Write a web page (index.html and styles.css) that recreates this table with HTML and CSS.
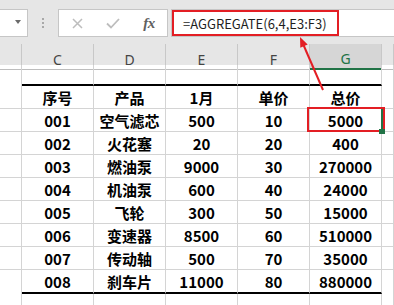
FILE: index.html
```html
<!DOCTYPE html>
<html>
<head>
<meta charset="utf-8">
<link rel="stylesheet" href="styles.css">
</head>
<body>
<div class="app">
  <div class="fbar">
    <div class="namebox"><span class="caret"></span></div>
    <div class="grip"><i></i><i></i><i></i></div>
    <div class="btns">
      <span class="btn"><svg width="11" height="11" viewBox="0 0 11 11"><path d="M1 1L10 10M10 1L1 10" stroke="#bdbdbd" stroke-width="1.5" fill="none"/></svg></span>
      <span class="btn"><svg width="14" height="11" viewBox="0 0 14 11"><path d="M1 5.5L5 9.5L13 1" fill="none" stroke="#bdbdbd" stroke-width="1.8"/></svg></span>
      <span class="btn fx">fx</span>
    </div>
    <div class="formula"><span class="ftext">=AGGREGATE(6,4,E3:F3)</span></div>
  </div>

  <div class="colhead">
    <div class="h"></div>
    <div class="h">C</div>
    <div class="h">D</div>
    <div class="h">E</div>
    <div class="h">F</div>
    <div class="h sel">G</div>
    <div class="h"></div>
  </div>

  <div class="sheet">
    <div class="c edge"></div><div class="c top"></div><div class="c top"></div><div class="c top"></div><div class="c top"></div><div class="c top"></div><div class="c edge"></div>

    <div class="c"></div><div class="c">序号</div><div class="c">产品</div><div class="c">1月</div><div class="c">单价</div><div class="c">总价</div><div class="c"></div>

    <div class="c"></div><div class="c">001</div><div class="c">空气滤芯</div><div class="c">500</div><div class="c">10</div><div class="c">5000</div><div class="c"></div>
    <div class="c"></div><div class="c">002</div><div class="c">火花塞</div><div class="c">20</div><div class="c">20</div><div class="c">400</div><div class="c"></div>
    <div class="c"></div><div class="c">003</div><div class="c">燃油泵</div><div class="c">9000</div><div class="c">30</div><div class="c">270000</div><div class="c"></div>
    <div class="c"></div><div class="c">004</div><div class="c">机油泵</div><div class="c">600</div><div class="c">40</div><div class="c">24000</div><div class="c"></div>
    <div class="c"></div><div class="c">005</div><div class="c">飞轮</div><div class="c">300</div><div class="c">50</div><div class="c">15000</div><div class="c"></div>
    <div class="c"></div><div class="c">006</div><div class="c">变速器</div><div class="c">8500</div><div class="c">60</div><div class="c">510000</div><div class="c"></div>
    <div class="c"></div><div class="c">007</div><div class="c">传动轴</div><div class="c">500</div><div class="c">70</div><div class="c">35000</div><div class="c"></div>
    <div class="c edge"></div><div class="c bot">008</div><div class="c bot">刹车片</div><div class="c bot">11000</div><div class="c bot">80</div><div class="c bot">880000</div><div class="c edge"></div>

    <div class="c"></div><div class="c"></div><div class="c"></div><div class="c"></div><div class="c"></div><div class="c"></div><div class="c"></div>
  </div>

  <svg class="overlay" width="394" height="305" viewBox="0 0 394 305">
    <rect x="308" y="108" width="74" height="23" fill="none" stroke="#217346" stroke-width="2"/>
    <rect x="308" y="108" width="76" height="23" fill="none" stroke="#e31e24" stroke-width="2"/>
    <rect x="379" y="129" width="6" height="5" fill="#217346"/>
    <line x1="323" y1="90" x2="303.5" y2="45" stroke="#e31e24" stroke-width="2"/>
    <polygon points="300,37 307.7,44.6 300.3,47.8" fill="#e31e24"/>
  </svg>
</div>
</body>
</html>
```

FILE: styles.css
```css
html, body {
  margin: 0;
  padding: 0;
  background: #fff;
}

.app {
  position: relative;
  width: 394px;
  height: 305px;
  overflow: hidden;
  background: #fff;
  font-family: "Noto Sans CJK SC", "Noto Sans", sans-serif;
}

.fbar {
  height: 44px;
  box-sizing: border-box;
  background: #e6e6e6;
  display: flex;
  align-items: flex-start;
  padding-top: 9px;
}

.namebox {
  width: 29px;
  height: 28px;
  margin-left: -1px;
  box-sizing: border-box;
  background: #fff;
  border: 1px solid #c6c6c6;
  display: flex;
  align-items: flex-start;
  padding-left: 15px;
  padding-top: 10px;
}

.caret {
  width: 0;
  height: 0;
  border-left: 3px solid transparent;
  border-right: 3px solid transparent;
  border-top: 4px solid #6a6a6a;
}

.grip {
  width: 30px;
  display: flex;
  flex-direction: column;
  align-items: center;
  gap: 2px;
  padding-top: 9px;
}

.grip i {
  display: block;
  width: 2px;
  height: 2px;
  background: #a8a8a8;
}

.btns {
  width: 110px;
  height: 28px;
  box-sizing: border-box;
  background: #fff;
  border: 1px solid #c6c6c6;
  display: flex;
}

.btn {
  width: 36px;
  display: flex;
  align-items: center;
  justify-content: center;
}

.fx {
  font-family: "Liberation Serif", serif;
  font-style: italic;
  font-weight: 700;
  font-size: 15px;
  color: #606060;
  letter-spacing: -0.5px;
}

.formula {
  flex: 1;
  margin-left: 3px;
  height: 28px;
  box-sizing: border-box;
  background: #fff;
  border: 1px solid #c6c6c6;
  border-right: none;
  display: flex;
}

.ftext {
  width: 167px;
  height: 26px;
  box-sizing: border-box;
  border: 2px solid #e31e24;
  padding-left: 9px;
  display: flex;
  align-items: center;
  font-size: 13px;
  color: #1e1e1e;
  white-space: nowrap;
}

.colhead {
  display: grid;
  grid-template-columns: 22px repeat(5, 72px) 1fr;
  height: 21px;
  background: #e6e6e6;
}

.h {
  box-sizing: border-box;
  border-right: 1px solid #c8c8c8;
  border-bottom: 1px solid #bdbdbd;
  display: flex;
  align-items: center;
  justify-content: center;
  padding-top: 5px;
  font-family: "Noto Sans", sans-serif;
  font-size: 14px;
  color: #444;
}

.h.sel {
  background: #d6d6d6;
  color: #217346;
  border-bottom: 2px solid #217346;
}

.sheet {
  display: grid;
  grid-template-columns: 22px repeat(5, 72px) 1fr;
  grid-template-rows: 21px 23px repeat(7, 23px) 24px 23px;
}

.c {
  box-sizing: border-box;
  border-right: 1px solid #d4d4d4;
  border-bottom: 1px solid #d4d4d4;
  display: flex;
  align-items: center;
  justify-content: center;
  font-size: 15px;
  font-weight: 700;
  color: #000;
  white-space: nowrap;
}

.c.edge {
  border-bottom: none;
}

.c.top,
.c.bot {
  border-bottom: 2px solid #000;
}

.overlay {
  position: absolute;
  left: 0;
  top: 0;
  pointer-events: none;
}
```
